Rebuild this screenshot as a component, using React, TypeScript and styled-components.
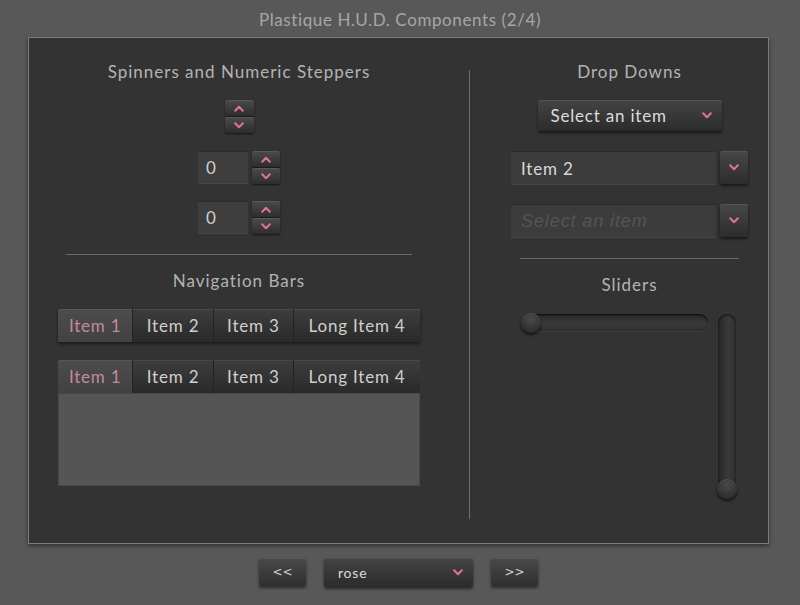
import styled, { createGlobalStyle } from "styled-components";

const GlobalStyle = createGlobalStyle`
  html, body {
    margin: 0;
    padding: 0;
    background: #585858;
  }
  body {
    font-family: Lato, "Open Sans", sans-serif;
  }
`;

const ROSE = "#e0709c";

const Page = styled.div`
  width: 800px;
  height: 605px;
  display: flex;
  flex-direction: column;
  align-items: center;
  background: #585858;
`;

const Title = styled.div`
  height: 37px;
  width: 100%;
  text-align: center;
  line-height: 40px;
  font-size: 17px;
  letter-spacing: 0.6px;
  color: #a6a6a6;
`;

const Panel = styled.div`
  width: 739px;
  height: 505px;
  margin-left: -3px;
  background: #333333;
  border: 1px solid #7c7c7c;
  box-shadow: 0 2px 4px rgba(0, 0, 0, 0.45);
  display: flex;
`;

const LeftColumn = styled.div`
  width: 362px;
  padding: 24px 49px 0 29px;
  display: flex;
  flex-direction: column;
  align-items: center;
`;

const Divider = styled.div`
  width: 1px;
  margin: 32px 0 24px;
  background: #6e6e6e;
`;

const RightColumn = styled.div`
  width: 237px;
  padding: 24px 20px 0 41px;
  display: flex;
  flex-direction: column;
  align-items: center;
`;

const Heading = styled.div<{ $top?: number }>`
  font-size: 17px;
  line-height: 20px;
  letter-spacing: 1px;
  color: #b4b4b4;
  white-space: nowrap;
  margin-top: ${(p) => p.$top ?? 0}px;
`;

const Rule = styled.div<{ $width: number; $top: number }>`
  width: ${(p) => p.$width}px;
  height: 1px;
  background: #6a6a6a;
  margin-top: ${(p) => p.$top}px;
`;

const Row = styled.div<{ $top: number }>`
  display: flex;
  align-items: flex-start;
  gap: 4px;
  margin-top: ${(p) => p.$top}px;
`;

const StepperStack = styled.div`
  display: flex;
  flex-direction: column;
  gap: 1px;
`;

const StepButton = styled.div<{ $width: number }>`
  width: ${(p) => p.$width}px;
  height: 16px;
  display: flex;
  align-items: center;
  justify-content: center;
  background: linear-gradient(#4b4b4b, #2d2d2d);
  border-radius: 2px;
  box-shadow: 0 1px 2px rgba(0, 0, 0, 0.6), inset 0 1px 0 rgba(255, 255, 255, 0.08);
`;

const NumberField = styled.div`
  width: 42px;
  height: 31px;
  padding-left: 8px;
  box-sizing: content-box;
  display: flex;
  align-items: center;
  background: #3e3e3e;
  border-top: 1px solid #2c2c2c;
  border-bottom: 1px solid #474747;
  color: #d0d0d0;
  font-size: 17px;
`;

const NavBar = styled.div<{ $top: number; $tabs?: boolean }>`
  display: flex;
  width: 362px;
  height: 33px;
  margin-top: ${(p) => p.$top}px;
  box-shadow: ${(p) => (p.$tabs ? "none" : "0 2px 3px rgba(0, 0, 0, 0.5)")};
`;

const NavItem = styled.div<{ $width: number; $active?: boolean }>`
  width: ${(p) => p.$width}px;
  display: flex;
  align-items: center;
  justify-content: center;
  font-size: 17px;
  letter-spacing: 0.8px;
  color: ${(p) => (p.$active ? "#c28aa0" : "#cfcfcf")};
  background: ${(p) =>
    p.$active ? "linear-gradient(#4c4c4c, #424242)" : "linear-gradient(#3d3d3d, #2a2a2a)"};
  border-left: 1px solid ${(p) => (p.$active ? "#555" : "#232323")};
  box-shadow: inset 0 1px 0 rgba(255, 255, 255, 0.07);
  &:first-child {
    border-left: none;
    border-radius: 2px 0 0 0;
  }
`;

const TabBody = styled.div`
  width: 360px;
  height: 91px;
  background: #555555;
  border: 1px solid #484848;
`;

const DropButton = styled.div<{ $width: number; $height: number; $size: number; $pad: number }>`
  width: ${(p) => p.$width}px;
  height: ${(p) => p.$height}px;
  box-sizing: border-box;
  padding: 0 10px 0 ${(p) => p.$pad}px;
  display: flex;
  align-items: center;
  justify-content: space-between;
  background: linear-gradient(#444444, #2b2b2b);
  border-radius: 2px;
  box-shadow: 0 2px 3px rgba(0, 0, 0, 0.55), inset 0 1px 0 rgba(255, 255, 255, 0.08);
  color: #dcdcdc;
  font-size: ${(p) => p.$size}px;
  letter-spacing: 0.8px;
`;

const ComboRow = styled.div<{ $top: number }>`
  display: flex;
  gap: 4px;
  margin-top: ${(p) => p.$top}px;
`;

const ComboField = styled.div<{ $disabled?: boolean }>`
  width: 195px;
  height: 32px;
  padding-left: 10px;
  box-sizing: content-box;
  display: flex;
  align-items: center;
  background: #3c3c3c;
  border-top: 1px solid #2b2b2b;
  border-bottom: 1px solid #464646;
  font-size: ${(p) => (p.$disabled ? 18 : 17)}px;
  font-family: ${(p) => (p.$disabled ? '"Liberation Sans", Arial, sans-serif' : "inherit")};
  font-style: ${(p) => (p.$disabled ? "italic" : "normal")};
  letter-spacing: ${(p) => (p.$disabled ? "0.9px" : "0.8px")};
  color: ${(p) => (p.$disabled ? "#555" : "#d8d8d8")};
`;

const ComboButton = styled.div`
  width: 28px;
  height: 33px;
  display: flex;
  align-items: center;
  justify-content: center;
  background: linear-gradient(#474747, #2c2c2c);
  border-radius: 2px;
  box-shadow: 0 2px 3px rgba(0, 0, 0, 0.55), inset 0 1px 0 rgba(255, 255, 255, 0.08);
`;

const SliderArea = styled.div`
  display: flex;
  align-items: flex-start;
  gap: 10px;
  margin-top: 19px;
  margin-left: 10px;
  align-self: flex-start;
`;

const Track = styled.div<{ $vertical?: boolean }>`
  position: relative;
  width: ${(p) => (p.$vertical ? 18 : 187)}px;
  height: ${(p) => (p.$vertical ? 185 : 17)}px;
  border-radius: 9px;
  background: linear-gradient(${(p) => (p.$vertical ? "90deg" : "180deg")}, #262626, #3a3a3a 60%, #2e2e2e);
  box-shadow: inset 0 1px 2px rgba(0, 0, 0, 0.7), 0 1px 0 rgba(255, 255, 255, 0.06);
`;

const Thumb = styled.div<{ $vertical?: boolean }>`
  position: absolute;
  width: 20px;
  height: 20px;
  border-radius: 50%;
  left: ${(p) => (p.$vertical ? "-1px" : "0")};
  top: ${(p) => (p.$vertical ? "auto" : "-1px")};
  bottom: ${(p) => (p.$vertical ? "0" : "auto")};
  background: radial-gradient(circle at 50% 30%, #4a4a4a, #2e2e2e 75%);
  box-shadow: 0 2px 3px rgba(0, 0, 0, 0.7), inset 0 1px 0 rgba(255, 255, 255, 0.1);
`;

const Footer = styled.div`
  display: flex;
  gap: 18px;
  margin-top: 14px;
  margin-left: -3px;
`;

const FooterButton = styled.div`
  width: 47px;
  height: 28px;
  display: flex;
  align-items: center;
  justify-content: center;
  background: linear-gradient(#4a4a4a, #2f2f2f);
  border-radius: 2px;
  box-shadow: 0 2px 3px rgba(0, 0, 0, 0.5), inset 0 1px 0 rgba(255, 255, 255, 0.08);
  color: #d0d0d0;
  font-size: 12px;
  font-family: "DejaVu Sans", sans-serif;
`;

const Chevron = ({ up = false }: { up?: boolean }) => (
  <svg width="10" height="7" viewBox="0 0 10 7">
    <path
      d={up ? "M1.2 5.8 L5 1.8 L8.8 5.8" : "M1.2 1.2 L5 5.2 L8.8 1.2"}
      fill="none"
      stroke={ROSE}
      strokeWidth="2"
      strokeLinecap="round"
      strokeLinejoin="round"
    />
  </svg>
);

const Spinner = ({ width = 28 }: { width?: number }) => (
  <StepperStack>
    <StepButton $width={width}>
      <Chevron up />
    </StepButton>
    <StepButton $width={width}>
      <Chevron />
    </StepButton>
  </StepperStack>
);

const navItems = [
  { label: "Item 1", width: 75 },
  { label: "Item 2", width: 80 },
  { label: "Item 3", width: 80 },
  { label: "Long Item 4", width: 127 },
];

const NavItems = () => (
  <>
    {navItems.map((n, i) => (
      <NavItem key={n.label} $width={n.width} $active={i === 0}>
        {n.label}
      </NavItem>
    ))}
  </>
);

export default function App() {
  return (
    <Page>
      <GlobalStyle />
      <Title>Plastique H.U.D. Components (2/4)</Title>
      <Panel>
        <LeftColumn>
          <Heading>Spinners and Numeric Steppers</Heading>
          <Row $top={18}>
            <Spinner width={29} />
          </Row>
          <Row $top={18}>
            <NumberField>0</NumberField>
            <Spinner />
          </Row>
          <Row $top={17}>
            <NumberField>0</NumberField>
            <Spinner />
          </Row>
          <Rule $width={346} $top={20} />
          <Heading $top={16}>Navigation Bars</Heading>
          <NavBar $top={18}>
            <NavItems />
          </NavBar>
          <NavBar $top={18} $tabs>
            <NavItems />
          </NavBar>
          <TabBody />
        </LeftColumn>
        <Divider />
        <RightColumn>
          <Heading>Drop Downs</Heading>
          <Row $top={18}>
            <DropButton $width={184} $height={31} $size={17} $pad={13}>
              Select an item
              <Chevron />
            </DropButton>
          </Row>
          <ComboRow $top={20}>
            <ComboField>Item 2</ComboField>
            <ComboButton>
              <Chevron />
            </ComboButton>
          </ComboRow>
          <ComboRow $top={19}>
            <ComboField $disabled>Select an item</ComboField>
            <ComboButton>
              <Chevron />
            </ComboButton>
          </ComboRow>
          <Rule $width={219} $top={20} />
          <Heading $top={16}>Sliders</Heading>
          <SliderArea>
            <Track>
              <Thumb />
            </Track>
            <Track $vertical>
              <Thumb $vertical />
            </Track>
          </SliderArea>
        </RightColumn>
      </Panel>
      <Footer>
        <FooterButton>&lt;&lt;</FooterButton>
        <DropButton $width={149} $height={29} $size={14} $pad={14}>
          rose
          <Chevron />
        </DropButton>
        <FooterButton>&gt;&gt;</FooterButton>
      </Footer>
    </Page>
  );
}
